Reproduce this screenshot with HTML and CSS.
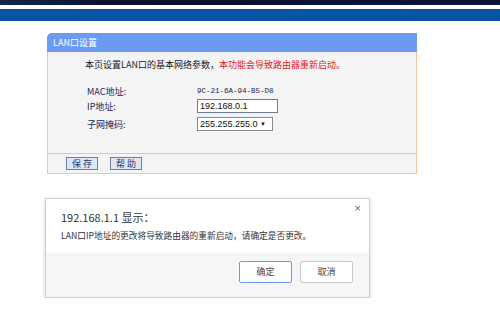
FILE: index.html
```html
<!DOCTYPE html>
<html lang="zh-CN">
<head>
<meta charset="utf-8">
<title>LAN口设置</title>
<link rel="stylesheet" href="styles.css">
</head>
<body>
<div class="topbar"></div>
<div class="strip"></div>
<div class="band"></div>

<div class="panel">
  <div class="panel-head">LAN口设置</div>
  <div class="panel-body">
    <p class="intro">本页设置LAN口的基本网络参数，<span class="warn">本功能会导致路由器重新启动。</span></p>
    <div class="row row-mac"><span class="label">MAC地址:</span><span class="mac">9C-21-6A-94-B5-D8</span></div>
    <div class="row row-ip"><span class="label">IP地址:</span><span class="input">192.168.0.1</span></div>
    <div class="row row-mask"><span class="label">子网掩码:</span><span class="select">255.255.255.0 <span class="arrow">▼</span></span></div>
  </div>
  <div class="panel-foot">
    <span class="btn">保存</span>
    <span class="btn">帮助</span>
  </div>
</div>

<div class="dialog">
  <span class="close">×</span>
  <div class="dlg-title">192.168.1.1 显示：</div>
  <div class="dlg-msg">LAN口IP地址的更改将导致路由器的重新启动，请确定是否更改。</div>
  <div class="dlg-foot">
    <span class="dbtn primary">确定</span>
    <span class="dbtn">取消</span>
  </div>
</div>
</body>
</html>
```

FILE: styles.css
```css
html, body {
  margin: 0;
  padding: 0;
  background: #ffffff;
  font-family: "Noto Sans CJK SC", "Liberation Sans", sans-serif;
}
.topbar {
  height: 5px;
  background: linear-gradient(90deg, #1a2648 0%, #0a1230 20%, #0b1332 100%);
}
.strip {
  height: 4px;
  background: #ffffff;
}
.band {
  height: 12px;
  background: #0853a3;
}
.panel {
  margin: 12px 0 0 47px;
  width: 370px;
}
.panel-head {
  height: 19px;
  line-height: 19px;
  background: #6b9bf1;
  border-radius: 5px 0 0 0;
  color: #ffffff;
  font-size: 9px;
  padding-left: 6px;
}
.panel-body {
  background: #f4f4f4;
  border-left: 1px solid #f0c79c;
  border-right: 1px solid #f0c79c;
  padding: 6px 0 22px 0;
}
.intro {
  margin: 0 0 13px 37px;
  font-size: 9px;
  line-height: 13px;
  color: #1a1a1a;
}
.warn {
  color: #e3191c;
}
.row {
  display: flex;
  align-items: center;
  height: 14px;
  margin-left: 39px;
}
.row-ip {
  margin-top: 1px;
}
.row-mask {
  margin-top: 4px;
}
.label {
  width: 110px;
  font-size: 9px;
  color: #14285c;
}
.mac {
  font-family: "Liberation Mono", monospace;
  font-size: 7.5px;
  color: #14285c;
}
.input {
  box-sizing: border-box;
  width: 81px;
  height: 14px;
  line-height: 12px;
  border: 1px solid #6e7b96;
  background: #ffffff;
  font-family: "Liberation Sans", sans-serif;
  font-size: 9px;
  padding-left: 2px;
  color: #111;
}
.select {
  box-sizing: border-box;
  width: 76px;
  height: 14px;
  line-height: 12px;
  border: 1px solid #8a8a8a;
  background: #ffffff;
  font-family: "Liberation Sans", sans-serif;
  font-size: 9px;
  padding-left: 2px;
  color: #111;
}
.arrow {
  font-size: 6px;
  vertical-align: 1px;
}
.panel-foot {
  box-sizing: border-box;
  height: 21px;
  background: #f4f4f4;
  border: 1px solid #f0c79c;
  display: flex;
  align-items: center;
  gap: 12px;
  padding-left: 18px;
}
.btn {
  box-sizing: border-box;
  width: 32px;
  height: 13px;
  line-height: 11px;
  text-align: center;
  font-size: 9px;
  letter-spacing: 2px;
  text-indent: 2px;
  color: #1c3570;
  background: #dfe6f3;
  border: 1px solid #6c80ad;
}
.dialog {
  position: relative;
  box-sizing: border-box;
  margin: 24px 0 0 45px;
  width: 325px;
  height: 100px;
  background: #ffffff;
  border: 1px solid #cfcfcf;
  box-shadow: 0 2px 4px rgba(0, 0, 0, 0.18);
  display: flex;
  flex-direction: column;
}
.close {
  position: absolute;
  top: 3px;
  right: 8px;
  font-size: 11px;
  color: #666;
  font-family: "Liberation Sans", sans-serif;
}
.dlg-title {
  margin: 11px 0 0 15px;
  font-size: 11px;
  line-height: 14px;
  color: #333;
}
.dlg-msg {
  margin: 6px 0 0 15px;
  font-size: 8.7px;
  line-height: 12px;
  color: #333;
}
.dlg-foot {
  margin-top: auto;
  height: 44px;
  background: #f6f6f6;
  display: flex;
  justify-content: flex-end;
  align-items: flex-start;
  gap: 8px;
  padding: 8px 16px 0 0;
  box-sizing: border-box;
}
.dbtn {
  box-sizing: border-box;
  width: 53px;
  height: 22px;
  line-height: 20px;
  text-align: center;
  font-size: 9px;
  color: #444;
  background: #ffffff;
  border: 1px solid #c8c8c8;
  border-radius: 2px;
}
.dbtn.primary {
  border-color: #6a9be8;
}
```
